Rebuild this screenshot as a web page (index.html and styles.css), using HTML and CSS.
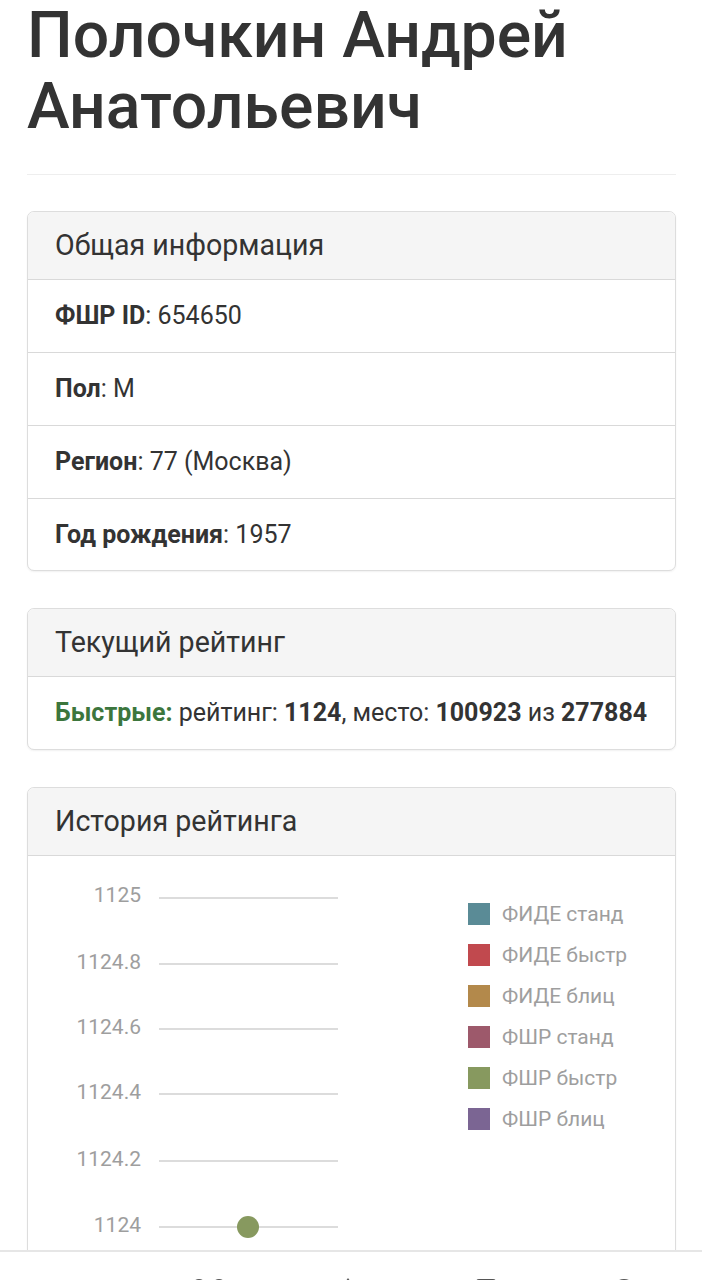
FILE: index.html
```html
<!DOCTYPE html>
<html lang="ru">
<head>
<meta charset="utf-8">
<title>Полочкин Андрей Анатольевич</title>
<link rel="stylesheet" href="styles.css">
</head>
<body>
<div class="container">
  <div class="page-header">
    <h1>Полочкин Андрей Анатольевич</h1>
  </div>

  <div class="panel">
    <div class="panel-heading">Общая информация</div>
    <div class="list-item"><b>ФШР ID</b>: 654650</div>
    <div class="list-item"><b>Пол</b>: М</div>
    <div class="list-item"><b>Регион</b>: 77 (Москва)</div>
    <div class="list-item"><b>Год рождения</b>: 1957</div>
  </div>

  <div class="panel">
    <div class="panel-heading">Текущий рейтинг</div>
    <div class="list-item"><b class="success">Быстрые:</b> рейтинг: <b>1124</b>, место: <b>100923</b> из <b>277884</b></div>
  </div>

  <div class="panel panel-chart">
    <div class="panel-heading">История рейтинга</div>
    <div class="chart-body">
      <svg class="chart" width="647" height="520" viewBox="0 0 647 520">
        <g class="grid">
          <line x1="131" y1="42" x2="310" y2="42"/>
          <line x1="131" y1="108" x2="310" y2="108"/>
          <line x1="131" y1="173" x2="310" y2="173"/>
          <line x1="131" y1="238" x2="310" y2="238"/>
          <line x1="131" y1="305" x2="310" y2="305"/>
          <line x1="131" y1="371" x2="310" y2="371"/>
        </g>
        <g class="axis">
          <text x="113" y="46">1125</text>
          <text x="113" y="113">1124.8</text>
          <text x="113" y="178">1124.6</text>
          <text x="113" y="243">1124.4</text>
          <text x="113" y="310">1124.2</text>
          <text x="113" y="376">1124</text>
        </g>
        <circle cx="220" cy="371" r="11" fill="#87995f"/>
        <g class="legend">
          <rect x="440" y="47" width="22" height="22" fill="#5a8b96"/>
          <text x="474" y="65">ФИДЕ станд</text>
          <rect x="440" y="88" width="22" height="22" fill="#c1494e"/>
          <text x="474" y="106">ФИДЕ быстр</text>
          <rect x="440" y="129" width="22" height="22" fill="#b3894b"/>
          <text x="474" y="147">ФИДЕ блиц</text>
          <rect x="440" y="170" width="22" height="22" fill="#9d596b"/>
          <text x="474" y="188">ФШР станд</text>
          <rect x="440" y="211" width="22" height="22" fill="#87995f"/>
          <text x="474" y="229">ФШР быстр</text>
          <rect x="440" y="252" width="22" height="22" fill="#7b6593"/>
          <text x="474" y="270">ФШР блиц</text>
        </g>
      </svg>
    </div>
  </div>
</div>

<nav class="bottom-bar">
  <svg class="nav-icon" width="44" height="40" viewBox="0 0 44 40"><circle cx="11" cy="10" r="7"/><circle cx="31" cy="10" r="7"/></svg>
  <svg class="nav-icon" width="44" height="40" viewBox="0 0 44 40"><path d="M22 2 L32 16 L12 16 Z"/></svg>
  <svg class="nav-icon" width="44" height="40" viewBox="0 0 44 40"><rect x="12" y="3" width="20" height="20" rx="3"/></svg>
  <svg class="nav-icon" width="44" height="40" viewBox="0 0 44 40"><circle cx="22" cy="15" r="12"/></svg>
</nav>
</body>
</html>
```

FILE: styles.css
```css
* { box-sizing: border-box; }

html, body {
  margin: 0;
  padding: 0;
  background: #fff;
}

body {
  font-family: Roboto, "Liberation Sans", sans-serif;
  font-size: 25px;
  line-height: 35.7px;
  color: #333;
}

.container {
  padding: 0 26px 0 27px;
}

.page-header {
  padding-bottom: 16px;
  border-bottom: 1px solid #eee;
  margin-bottom: 36px;
}

.page-header h1 {
  margin: 0 0 17px;
  font-size: 64.3px;
  line-height: 1.1;
  font-weight: 500;
  color: #333;
}

.panel {
  border: 1px solid #ddd;
  border-radius: 7px;
  box-shadow: 0 1px 2px rgba(0, 0, 0, 0.06);
  margin-bottom: 37px;
  overflow: hidden;
  background: #fff;
}

.panel-heading {
  background: #f5f5f5;
  border-bottom: 1px solid #d9d9d9;
  padding: 17.8px 27px;
  font-size: 28.6px;
  line-height: 1.1;
  color: #333;
}

.list-item {
  padding: 18px 27px;
  line-height: 35.7px;
}

.list-item + .list-item {
  border-top: 1px solid #d9d9d9;
}

.list-item b {
  font-weight: 700;
}

.success {
  color: #3c763d;
}

.chart-body {
  height: 520px;
}

.chart {
  display: block;
}

.grid line {
  stroke: #dcdcdc;
  stroke-width: 2;
}

.axis text {
  font-family: Roboto, "Liberation Sans", sans-serif;
  font-size: 21px;
  fill: #9e9e9e;
  text-anchor: end;
}

.legend text {
  font-family: Roboto, "Liberation Sans", sans-serif;
  font-size: 21px;
  fill: #9e9e9e;
}

.bottom-bar {
  position: fixed;
  left: 0;
  right: 0;
  bottom: 0;
  height: 30px;
  background: #fff;
  border-top: 2px solid #e6e6e6;
  overflow: hidden;
  display: flex;
  gap: 94px;
  padding: 24px 0 0 188px;
}

.nav-icon {
  fill: #555;
  flex: none;
}
```
